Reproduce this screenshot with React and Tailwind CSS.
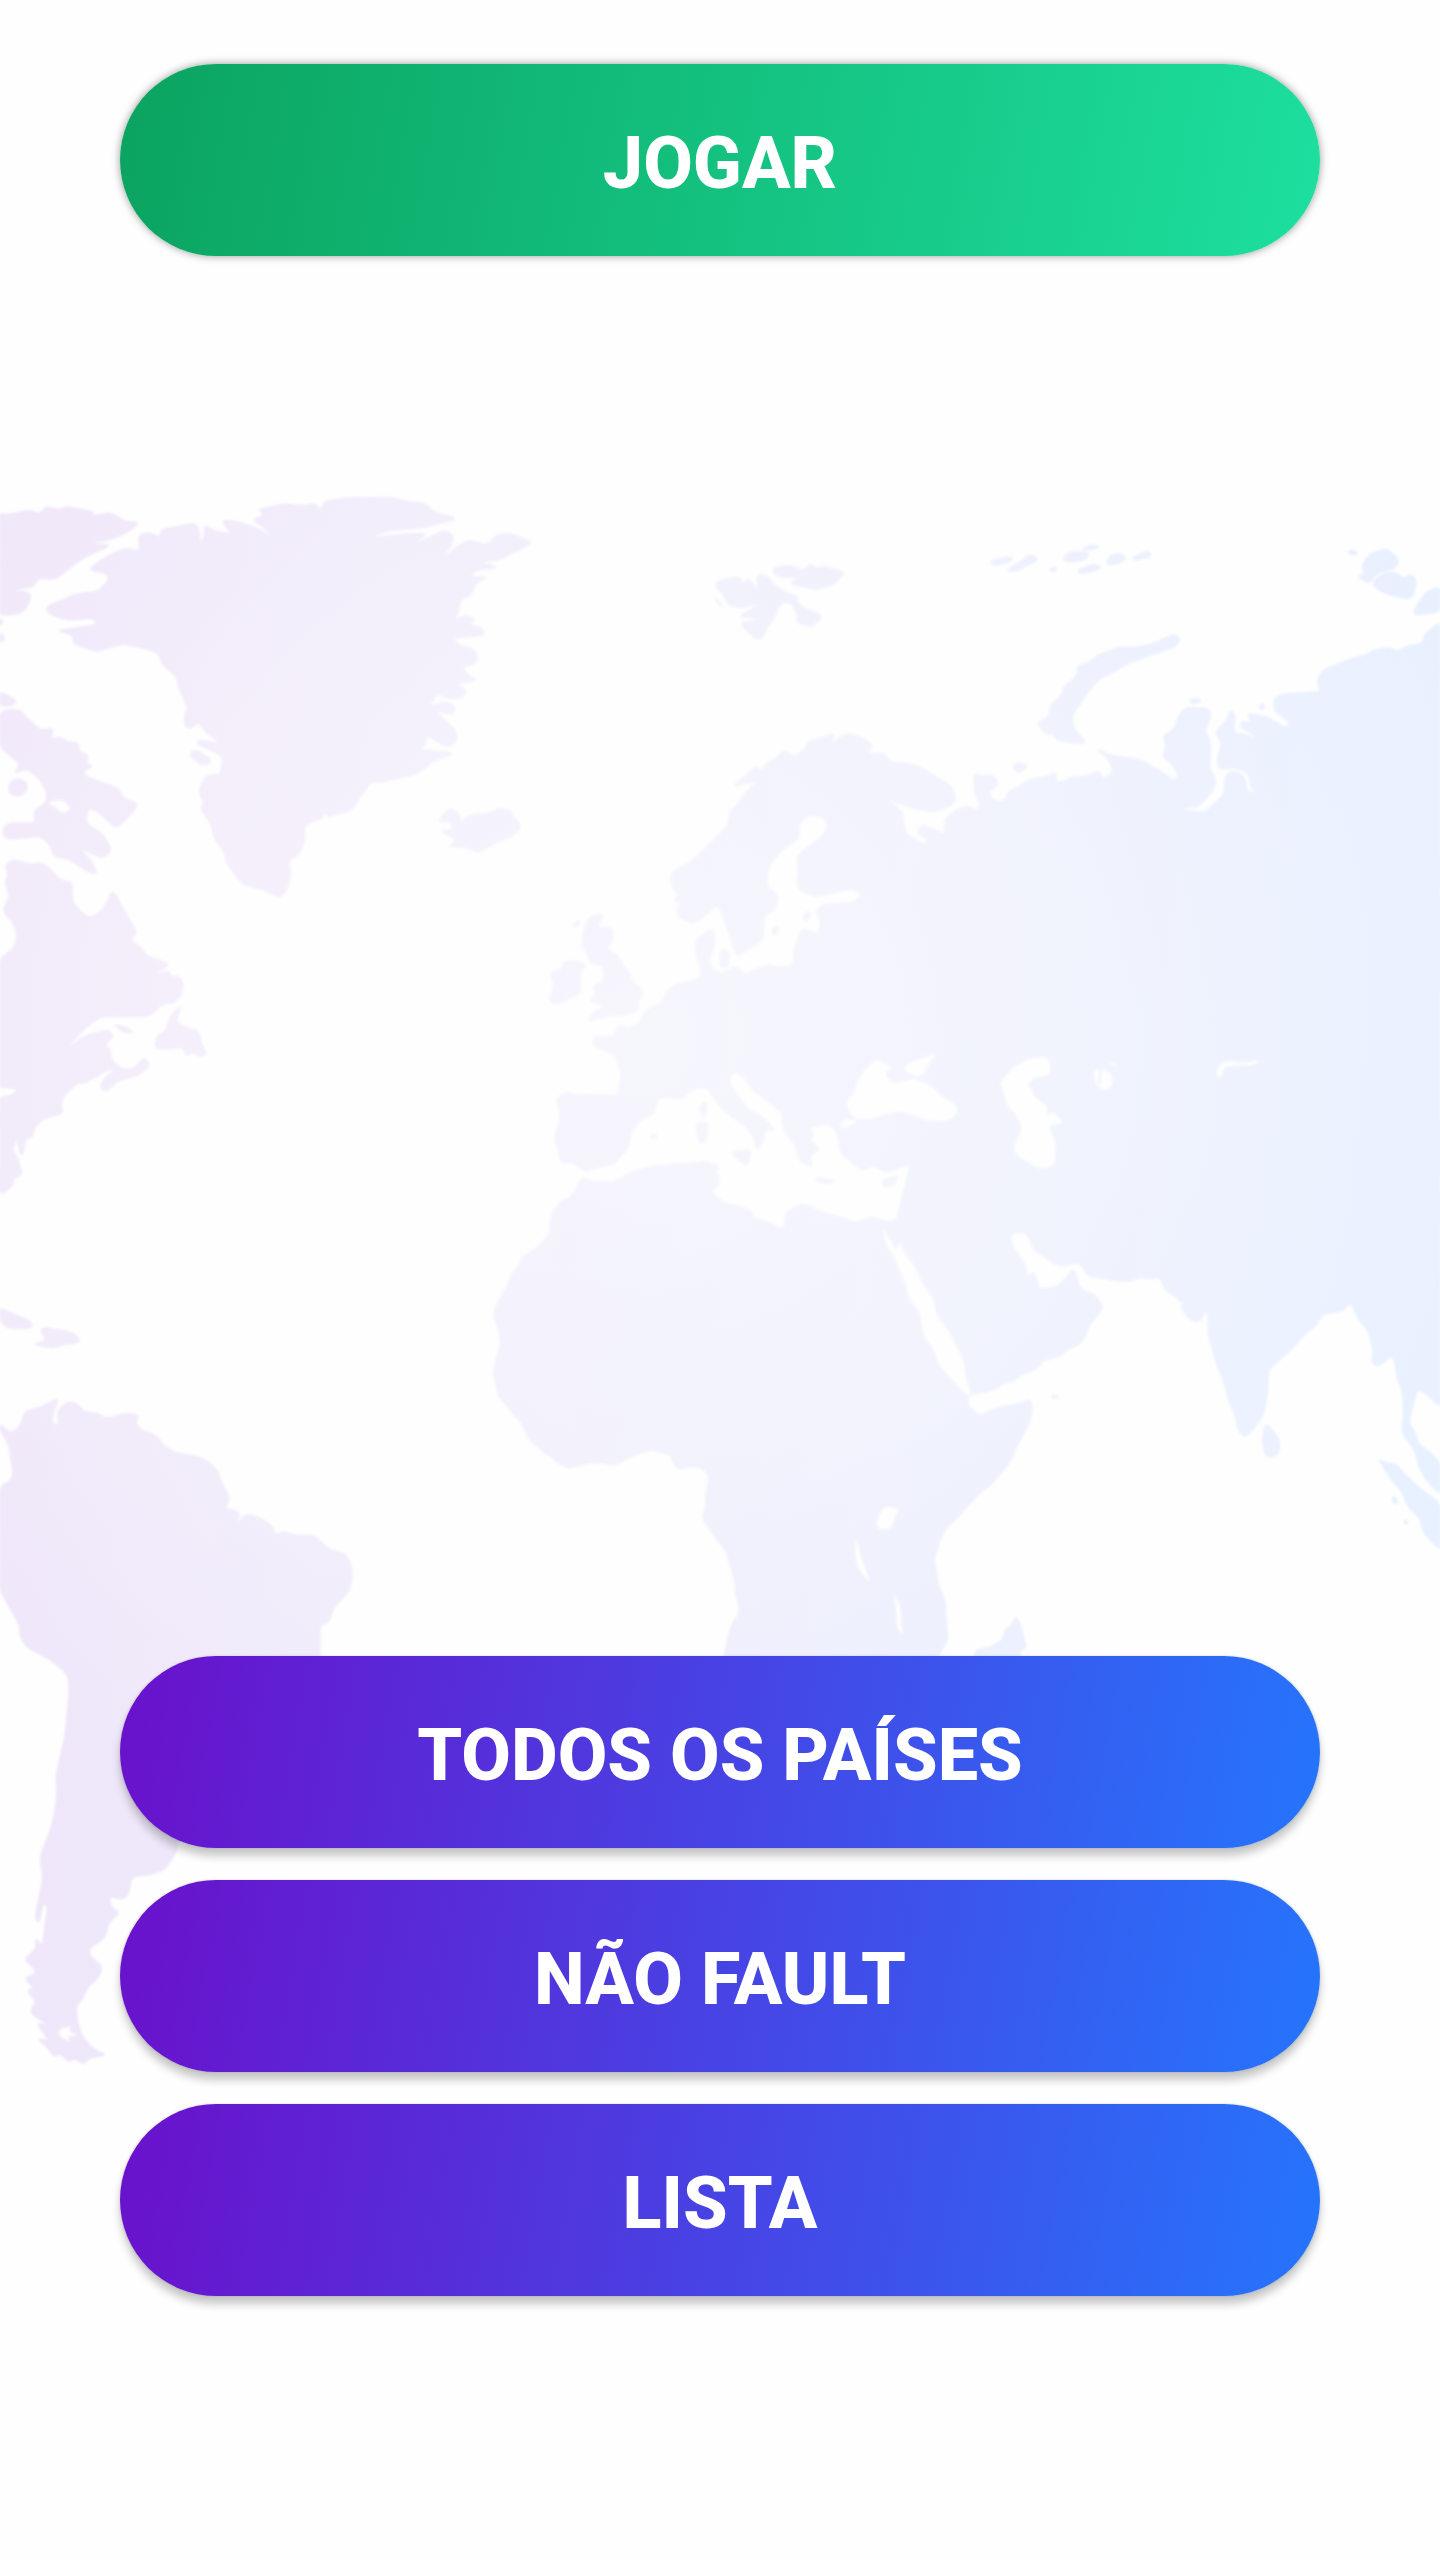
const LAND = [
  {
    at: "translate(0 480) scale(.35714 .33333)",
    land: "M0 98 20 105 90 90 110 105 130 78 165 90 185 80 265 95 250 110 310 98 350 125 390 128 360 155 310 178 245 190 310 195 230 235 155 298 105 295 95 320 20 332 75 335 88 350 70 390 50 402 0 405Z M130 380 220 340 275 335 305 300 300 280 248 270 290 235 350 205 392 215 388 165 420 158 450 175 450 150 545 130 558 150 558 192 575 170 572 135 610 158 648 160 620 120 665 125 720 145 765 175 745 145 705 120 742 105 722 88 800 72 840 78 885 72 897 95 908 65 970 55 1100 52 1130 65 1190 70 1215 98 1280 115 1200 140 1080 153 1030 178 1100 165 1195 160 1150 200 1245 150 1270 165 1262 200 1225 245 1308 180 1368 195 1390 165 1430 160 1492 188 1395 240 1340 245 1395 262 1335 270 1310 292 1365 290 1328 312 1322 340 1288 360 1285 395 1268 420 1310 405 1335 422 1305 430 1350 445 1358 465 1265 475 1290 500 1325 505 1338 530 1330 552 1292 560 1308 585 1338 600 1275 610 1308 635 1290 655 1255 655 1222 640 1200 680 1255 665 1275 685 1265 705 1215 690 1275 750 1280 785 1255 802 1190 765 1195 790 1170 808 1270 820 1210 845 1170 880 1060 908 1042 902 1015 940 985 990 915 1012 908 985 905 1015 870 1025 850 1042 855 1070 840 1120 805 1145 815 1180 805 1225 785 1255 740 1230 680 1212 635 1150 630 1120 598 1070 592 1030 560 985 575 965 555 940 578 885 618 885 625 830 600 815 550 790 560 780 620 792 570 750 560 725 535 745 517 740 518 700 528 685 500 620 495 590 455 555 445 520 400 503 340 492 270 515 205 490 205 465 160 452 272 435 265 415 190 420 135 400Z M530 825 545 808 595 840 570 860Z M1225 1025 1258 985 1285 1000 1290 1030 1315 1005 1375 1000 1395 985 1430 990 1440 1015 1460 1038 1440 1065 1375 1095 1340 1118 1305 1100 1255 1100 1280 1080 1232 1052 1268 1048 1265 1025Z M0 700 20 688 60 690 75 715 115 752 150 742 140 780 170 770 185 785 222 790 220 815 248 825 240 850 262 860 232 870 240 890 330 925 345 955 388 972 355 1015 325 1045 270 990 245 985 240 1030 290 1065 313 1112 290 1135 265 1125 215 1100 255 1140 272 1182 245 1175 190 1135 150 1130 145 1100 115 1068 20 1078 5 1058 20 1030 100 1030 95 990 130 970 132 935 110 895 75 865 38 880 60 855 0 800Z M0 635 45 660 40 675 0 680Z M28 905 50 895 75 908 75 935 50 950 24 940Z M0 415 8 425 0 438Z M0 458 14 472 0 490Z",
    sea: "M130 968 175 958 200 985 175 1003 155 980Z",
  },
  {
    at: "translate(0 840) scale(.33333 .35714)",
    land: "M15 70 40 55 95 70 120 62 150 80 178 112 218 120 215 170 240 200 270 220 310 195 338 140 380 210 412 262 388 280 420 300 440 325 508 348 440 388 505 365 515 385 535 380 550 400 545 430 525 455 485 460 450 492 300 495 250 530 185 600 250 550 320 532 343 545 310 580 330 580 332 615 365 642 400 642 435 608 450 632 410 660 350 675 320 705 298 692 325 655 350 650 330 640 250 682 235 678 190 715 182 745 190 765 130 780 105 800 95 835 75 835 72 870 62 885 52 830 35 870 50 885 68 938 40 945 40 965 0 995 0 718 30 718 55 700 30 692 0 695 0 335 45 300 52 260 40 230 8 200 30 155 15 120 25 95Z M545 462 525 510 570 530 595 535 605 575 620 598 600 608 580 592 558 605 550 580 470 585 465 570 475 545 495 540 510 495Z M340 515 380 525 403 540 370 538Z M0 1310 50 1332 80 1342 98 1358 90 1366 25 1368 0 1345Z M120 1365 200 1375 225 1385 240 1400 225 1410 190 1410 165 1422 98 1412 140 1405Z",
  },
  {
    at: "translate(480 700) scale(.33333 .35714)",
    land: "M230 1115 260 1098 275 1105 415 1108 425 1040 400 990 340 970 340 942 405 945 412 908 450 920 485 900 495 870 545 850 560 815 600 792 660 782 665 760 650 715 645 680 665 660 695 640 705 665 700 700 685 725 690 745 720 768 770 745 790 770 830 755 870 740 900 752 940 742 945 690 965 640 1000 650 1015 660 1025 615 1005 595 1030 572 1110 570 1150 550 1125 528 1080 535 1010 550 970 538 950 520 958 480 950 440 980 415 1020 390 1048 350 1030 328 1000 320 970 330 955 350 958 385 900 425 865 465 858 520 897 552 880 590 850 605 850 670 800 700 768 718 755 670 740 635 720 580 705 575 680 600 640 625 600 610 588 590 605 570 580 560 600 545 578 530 572 485 640 450 665 425 690 405 720 375 745 350 750 315 780 285 810 245 840 225 760 240 800 212 825 185 845 200 860 175 890 165 910 138 940 160 975 140 985 115 1020 110 1065 92 1050 130 1085 100 1120 95 1180 125 1160 150 1215 150 1230 175 1300 180 1360 210 1410 240 1428 268 1420 290 1370 312 1320 308 1260 290 1205 268 1265 310 1275 375 1335 405 1345 390 1310 372 1325 350 1400 378 1392 340 1415 315 1460 298 1500 312 1500 1568 1300 1568 1250 1455 1290 1310 1285 1300 1215 1322 1180 1302 1150 1318 1110 1290 1080 1265 1078 1225 1062 1195 1035 1185 980 1200 1005 1215 985 1230 1020 1258 985 1275 1000 1308 960 1292 945 1245 905 1195 910 1155 860 1120 815 1090 795 1055 765 1040 748 1055 750 1082 780 1115 800 1145 850 1170 885 1205 848 1205 855 1225 830 1262 825 1225 800 1195 745 1160 700 1115 690 1090 665 1082 625 1098 605 1118 550 1110 530 1120 525 1155 480 1175 450 1215 448 1250 400 1300 350 1308 315 1322 285 1295 240 1295 238 1260 222 1235 242 1170Z M375 600 350 635 400 640 398 670 378 700 415 715 425 740 445 760 460 795 492 815 470 850 478 868 440 882 380 885 320 900 350 868 382 858 325 842 352 825 338 800 375 785 370 740 330 738 325 710 305 690 310 650 330 605Z M250 730 310 735 318 745 300 760 302 820 265 835 240 850 205 848 225 800 212 775 215 760 245 758Z M680 1122 680 1160 668 1165 658 1140Z M648 1185 683 1182 682 1225 660 1245Z M750 1265 815 1262 800 1305Z M1000 1338 1068 1345 1035 1356Z M1208 1345 1258 1332 1235 1362 1212 1362Z M720 700 750 705 745 745 722 750Z M875 640 900 632 882 665Z M280 625 302 615 290 640Z M972 600 990 592 985 618 970 615Z M510 1220 530 1216 525 1230Z M1483 205 1500 212 1500 270 1485 268Z",
    sea: "M1190 1003 1215 1020 1240 1028 1212 1045 1240 1075 1300 1058 1350 1078 1380 1105 1420 1128 1437 1150 1410 1178 1340 1178 1270 1152 1220 1158 1170 1175 1120 1172 1095 1130 1125 1095 1130 1070 1150 1040Z M1275 1020 1370 988 1345 1020 1325 1055 1275 1045Z M1075 1190 1100 1172 1135 1180 1095 1200Z",
  },
  {
    at: "translate(940 520) scale(.33333)",
    land: "M110 1200 110 875 122 850 108 825 115 790 100 765 165 768 175 798 140 815 165 845 195 845 205 815 230 805 270 778 330 770 350 755 345 785 365 788 395 770 440 770 475 752 490 780 522 755 505 715 468 685 520 710 590 715 660 752 705 785 718 765 690 725 668 712 680 675 668 650 705 625 715 590 735 563 805 565 813 590 793 633 812 665 808 750 828 775 820 810 775 860 740 862 725 858 740 872 795 878 855 820 855 765 885 752 915 770 920 815 950 820 930 800 930 765 890 742 835 748 833 705 848 675 825 635 860 605 870 567 885 585 880 640 925 645 950 662 940 642 900 620 905 605 940 610 920 580 975 588 1040 625 1050 605 1005 575 1000 535 1030 522 1145 515 1130 485 1150 450 1225 420 1280 405 1300 390 1350 383 1370 395 1405 378 1450 370 1452 345 1500 308 1500 1200Z M700 343 722 355 705 380 560 430 520 458 478 475 440 520 395 590 400 625 440 670 375 665 345 655 335 635 325 648 290 610 328 590 330 560 370 520 368 505 410 470 415 435 440 432 480 403 545 380 580 385 645 370Z M1285 105 1340 85 1378 120 1365 145 1310 160 1290 190 1250 170 1275 165 1265 140Z M1295 193 1320 165 1365 155 1390 178 1410 162 1430 180 1418 232 1395 236 1330 218Z M1500 200 1465 212 1440 240 1418 285 1500 275Z M148 125 205 110 222 118 165 138Z M198 152 250 120 270 103 297 118 225 155Z M325 148 350 140 345 156Z M368 115 390 95 450 100 430 122 380 125Z M420 92 455 73 482 80 450 90Z M410 152 460 132 487 142 430 162Z M497 132 515 103 545 102 560 118 520 135Z M575 115 625 93 635 108 590 120Z M217 740 235 725 265 738 235 760Z M747 545 765 533 787 542 765 552Z M957 560 968 550 975 562 965 570Z M1222 98 1238 89 1255 98 1238 105Z",
  },
  {
    at: "translate(480 1140) scale(.38265 .34439)",
    land: "M268 108 295 122 325 120 348 125 380 103 410 88 440 80 500 72 560 68 590 62 605 72 622 72 615 95 624 108 622 130 600 153 625 170 640 188 665 188 700 202 712 215 715 228 750 238 785 258 798 252 800 215 815 198 845 186 865 196 900 213 950 228 985 242 1000 232 1030 225 1055 236 1088 236 1100 200 1120 150 1128 75 1300 75 1300 727 1280 740 1270 762 1300 800 1320 795 1360 775 1400 770 1440 752 1443 790 1430 835 1400 890 1392 920 1360 970 1330 1005 1300 1030 1240 1105 1215 1128 1200 1165 1185 1220 1192 1245 1195 1290 1215 1335 1217 1390 1222 1450 1195 1500 1195 1530 640 1530 640 1490 655 1415 680 1370 675 1340 667 1310 668 1280 655 1235 640 1185 620 1162 580 1095 592 1070 590 1040 597 1000 598 970 575 948 550 948 520 956 508 940 495 910 475 908 450 898 415 908 350 944 310 935 280 938 235 953 215 945 150 890 125 865 115 830 70 770 48 745 45 715 35 685 45 625 55 600 50 550 35 510 45 475 75 420 80 395 105 360 115 335 150 315 185 270 183 235 190 215 210 178 240 165Z M1400 1380 1412 1410 1427 1475 1410 1480 1410 1530 1290 1530 1295 1482 1330 1475 1368 1452 1372 1420 1390 1412Z M1493 745 1502 739 1511 745 1502 752Z",
    sea: "M1054 258 1065 275 1088 322 1098 292 1105 320 1145 385 1155 415 1185 460 1193 510 1225 550 1240 590 1265 640 1270 690 1282 735 1275 745 1215 675 1195 645 1185 605 1158 570 1150 500 1120 462 1115 425 1085 345 1060 300Z M1058 1062 1098 1070 1085 1090 1073 1132 1035 1128 1040 1090Z M985 1155 990 1190 1005 1240 1020 1285 1000 1262 985 1235 980 1190Z M1083 1315 1100 1360 1100 1410 1108 1437 1092 1425 1088 1380Z",
  },
  {
    at: "translate(960 1000) scale(.33333 .35714)",
    land: "M40 -250 1440 -250 1440 1140 1410 1110 1375 1088 1365 1110 1345 1185 1365 1210 1375 1245 1405 1262 1440 1297 1440 1385 1405 1350 1375 1305 1368 1265 1325 1210 1332 1160 1328 1095 1312 1060 1305 1010 1292 992 1270 1018 1250 1025 1235 1015 1240 980 1225 925 1195 895 1185 870 1170 845 1150 870 1085 880 1070 910 1040 930 985 985 925 1035 922 1100 910 1160 880 1200 855 1225 835 1205 825 1160 805 1115 795 1075 770 1020 745 935 745 885 735 865 725 895 705 902 685 890 660 855 690 850 665 847 640 825 618 815 600 775 575 780 535 775 515 787 470 787 380 770 365 740 345 735 310 745 280 738 255 718 225 702 200 650 150 652 155 690 175 715 195 740 200 780 220 758 230 785 235 812 255 808 290 805 315 785 330 760 345 757 355 800 375 817 400 823 430 858 405 892 385 910 378 940 350 970 320 975 305 995 245 1010 235 1030 180 1050 160 1068 130 1072 110 1087 75 1098 30 1102 15 1050 0 980 0 0Z M915 1185 940 1205 960 1240 955 1270 935 1282 915 1272 907 1235Z M1255 1285 1280 1298 1310 1300 1330 1325 1375 1365 1440 1410 1440 1540 1390 1490 1380 1450 1340 1415 1330 1380 1300 1350Z M1295 1395 1305 1390 1313 1408 1303 1410Z M1332 1455 1344 1462 1336 1468Z",
    sea: "M215 160 268 162 272 212 225 215 200 238 218 248 220 270 262 295 262 325 280 312 312 345 265 352 288 400 285 465 240 472 215 462 165 430 162 405 185 365 180 340 135 285 132 255 118 235 150 195Z M400 195 415 192 418 205 412 235 422 240 425 195 445 198 458 215 455 245 430 256 405 235Z M445 175 472 180 465 187Z M772 215 770 195 785 175 805 170 850 176 898 168 890 180 840 184 800 184 790 195 785 215Z",
  },
  {
    at: "translate(0 1380) scale(.33333 .44643)",
    land: "M0 100 35 122 65 100 72 72 130 60 175 40 165 60 152 95 178 105 172 70 205 48 240 58 250 72 290 75 320 88 370 75 420 80 405 92 420 112 470 125 490 148 530 165 580 170 620 180 655 205 665 235 690 260 680 285 652 300 680 288 722 298 702 328 740 300 780 310 822 330 820 348 850 340 890 350 940 348 990 382 1040 390 1058 430 1050 470 1000 510 985 545 960 545 958 700 700 800 560 900 540 1000 530 1055 495 1095 450 1108 395 1110 385 1155 360 1162 325 1155 335 1185 360 1192 325 1215 315 1250 270 1270 268 1290 308 1315 295 1340 260 1360 250 1385 228 1400 230 1430 245 1470 280 1500 320 1512 265 1518 250 1533 225 1518 205 1528 185 1508 160 1515 145 1495 112 1475 150 1482 110 1440 160 1452 88 1415 112 1390 80 1370 105 1362 72 1340 112 1330 95 1310 72 1298 110 1275 105 1250 128 1270 135 1220 145 1180 128 1170 118 1215 105 1205 130 1115 120 1070 160 990 172 930 168 885 195 800 208 700 205 660 150 625 80 598 58 570 60 550 0 470 0 240 35 225 40 200 32 180 30 150 0 110Z",
    sea: "M175 1455 215 1448 205 1460 235 1468 200 1470 212 1482 180 1472Z",
  },
  {
    at: "translate(690 540) scale(.33333)",
    land: "M80 125 150 110 155 140 175 112 205 160 200 105 235 108 245 130 290 160 325 170 315 185 345 205 370 215 400 230 360 262 318 245 325 220 300 185 270 190 250 240 225 270 215 300 190 290 150 250 215 235 145 230 215 190 180 195 150 205 110 190 100 160 80 145Z M245 85 300 75 340 95 360 70 375 85 400 80 465 98 430 135 375 148 295 130 335 115 260 110Z M72 170 100 200 85 192Z",
  },
];

// Turns each closed polygon into an outline with rounded corners.
function roundCorners(d) {
  return d
    .split("Z")
    .filter((ring) => ring.trim())
    .map((ring) => {
      const n = ring.replace("M", "").trim().split(/\s+/).map(Number);
      const pts = [];
      for (let i = 0; i < n.length; i += 2) pts.push([n[i], n[i + 1]]);
      const toward = (a, b) => {
        const len = Math.hypot(b[0] - a[0], b[1] - a[1]) || 1;
        const t = Math.min(len * 0.48, 16) / len;
        return `${(a[0] + (b[0] - a[0]) * t).toFixed(1)} ${(a[1] + (b[1] - a[1]) * t).toFixed(1)}`;
      };
      return (
        pts
          .map((p, i) => {
            const prev = pts[(i + pts.length - 1) % pts.length];
            const next = pts[(i + 1) % pts.length];
            return `${i ? "L" : "M"}${toward(p, prev)}Q${p[0]} ${p[1]} ${toward(p, next)}`;
          })
          .join("") + "Z"
      );
    })
    .join("");
}

function WorldMap() {
  return (
    <svg
      aria-hidden="true"
      viewBox="0 0 1440 2560"
      preserveAspectRatio="xMidYMid slice"
      className="absolute inset-0 -z-10 h-full w-full"
    >
      <defs>
        <linearGradient id="tint" gradientUnits="userSpaceOnUse" x1="0" y1="1100" x2="1440" y2="1250">
          <stop offset="0" stopColor="#efe5f9" />
          <stop offset="0.25" stopColor="#ede8fa" />
          <stop offset="0.55" stopColor="#eaebfc" />
          <stop offset="1" stopColor="#e7f0ff" />
        </linearGradient>
        <radialGradient id="glow" gradientUnits="userSpaceOnUse" cx="640" cy="1040" r="900">
          <stop offset="0" stopColor="#fefefe" stopOpacity="0.6" />
          <stop offset="0.5" stopColor="#fefefe" stopOpacity="0.38" />
          <stop offset="1" stopColor="#fefefe" stopOpacity="0.05" />
        </radialGradient>
        <filter id="soft" filterUnits="userSpaceOnUse" x="-20" y="0" width="1480" height="2560">
          <feGaussianBlur stdDeviation="1" />
        </filter>
        <mask id="land" maskUnits="userSpaceOnUse" x="0" y="0" width="1440" height="2560">
          <g filter="url(#soft)">
            {LAND.map((part) => (
              <path key={part.at} transform={part.at} d={roundCorners(part.land)} fill="#fff" stroke="#fff" strokeWidth="5" strokeLinejoin="round" />
            ))}
            {LAND.filter((part) => part.sea).map((part) => (
              <path key={part.at} transform={part.at} d={roundCorners(part.sea)} fill="#000" stroke="#000" strokeWidth="4" strokeLinejoin="round" />
            ))}
          </g>
        </mask>
      </defs>
      <g mask="url(#land)">
        <rect width="1440" height="2560" fill="url(#tint)" />
        <rect width="1440" height="2560" fill="url(#glow)" />
      </g>
    </svg>
  );
}

const base =
  "flex h-48 w-full cursor-pointer items-center justify-center rounded-full pt-2 text-7xl font-extrabold text-white";
const purple =
  "bg-[linear-gradient(100deg,#6a11cb_0%,#2575fc_100%)] shadow-[0_8px_8px_rgba(0,0,0,0.22),0_0_3px_rgba(0,0,0,0.15)]";

export default function App() {
  return (
    <main className="relative isolate flex min-h-screen flex-col justify-between overflow-hidden bg-[#fefefe] px-[120px] pt-16 pb-[264px] font-['Roboto',sans-serif]">
      <WorldMap />
      <button
        type="button"
        className={`${base} bg-[linear-gradient(100deg,#0ba360_0%,#1ddf9f_100%)] shadow-[0_0_8px_rgba(0,0,0,0.4)]`}
      >
        JOGAR
      </button>
      <nav className="flex flex-col gap-8">
        <button type="button" className={`${base} ${purple}`}>TODOS OS PAÍSES</button>
        <button type="button" className={`${base} ${purple}`}>NÃO FAULT</button>
        <button type="button" className={`${base} ${purple}`}>LISTA</button>
      </nav>
    </main>
  );
}
